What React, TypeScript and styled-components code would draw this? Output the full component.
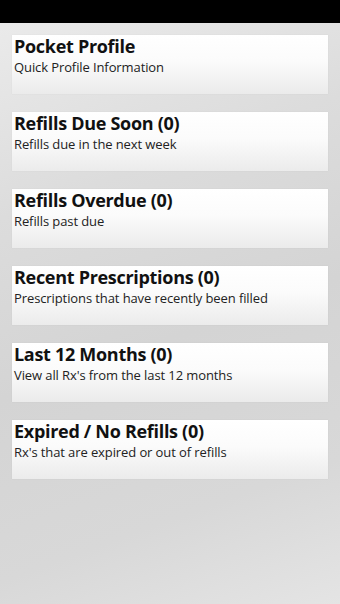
import React from "react";
import styled, { createGlobalStyle } from "styled-components";

const Global = createGlobalStyle`
  html, body { margin: 0; padding: 0; }
  body { width: 340px; height: 604px; overflow: hidden; font-family: "Open Sans", "Noto Sans", sans-serif; }
`;

const Screen = styled.div`
  width: 340px;
  height: 604px;
  display: flex;
  flex-direction: column;
  background: linear-gradient(160deg, #ececec 0%, #dcdcdc 30%, #d4d4d4 55%, #d8d8d8 80%, #e4e4e4 100%);
`;

const StatusBar = styled.div`
  height: 23px;
  background: #000;
  flex: none;
`;

const List = styled.div`
  display: flex;
  flex-direction: column;
  gap: 18px;
  padding: 12px 12px 0 12px;
`;

const Card = styled.div`
  height: 59px;
  box-sizing: border-box;
  padding: 1px 2px 0 2px;
  background: linear-gradient(180deg, #ffffff 0%, #fbfbfb 45%, #ebebeb 100%);
  box-shadow: 0 0 1px rgba(0,0,0,0.08);
`;

const Title = styled.div`
  font-weight: 700;
  font-size: 18px;
  line-height: 20px;
  color: #111;
  letter-spacing: -0.3px;
  white-space: nowrap;
`;

const Subtitle = styled.div`
  font-size: 13px;
  line-height: 23px;
  color: #222;
  letter-spacing: -0.1px;
  white-space: nowrap;
`;

const items = [
  ["Pocket Profile", "Quick Profile Information"],
  ["Refills Due Soon (0)", "Refills due in the next week"],
  ["Refills Overdue (0)", "Refills past due"],
  ["Recent Prescriptions (0)", "Prescriptions that have recently been filled"],
  ["Last 12 Months (0)", "View all Rx's from the last 12 months"],
  ["Expired / No Refills (0)", "Rx's that are expired or out of refills"],
];

export default function App() {
  return (
    <Screen>
      <Global />
      <StatusBar />
      <List>
        {items.map(([t, s]) => (
          <Card key={t}>
            <Title>{t}</Title>
            <Subtitle>{s}</Subtitle>
          </Card>
        ))}
      </List>
    </Screen>
  );
}
